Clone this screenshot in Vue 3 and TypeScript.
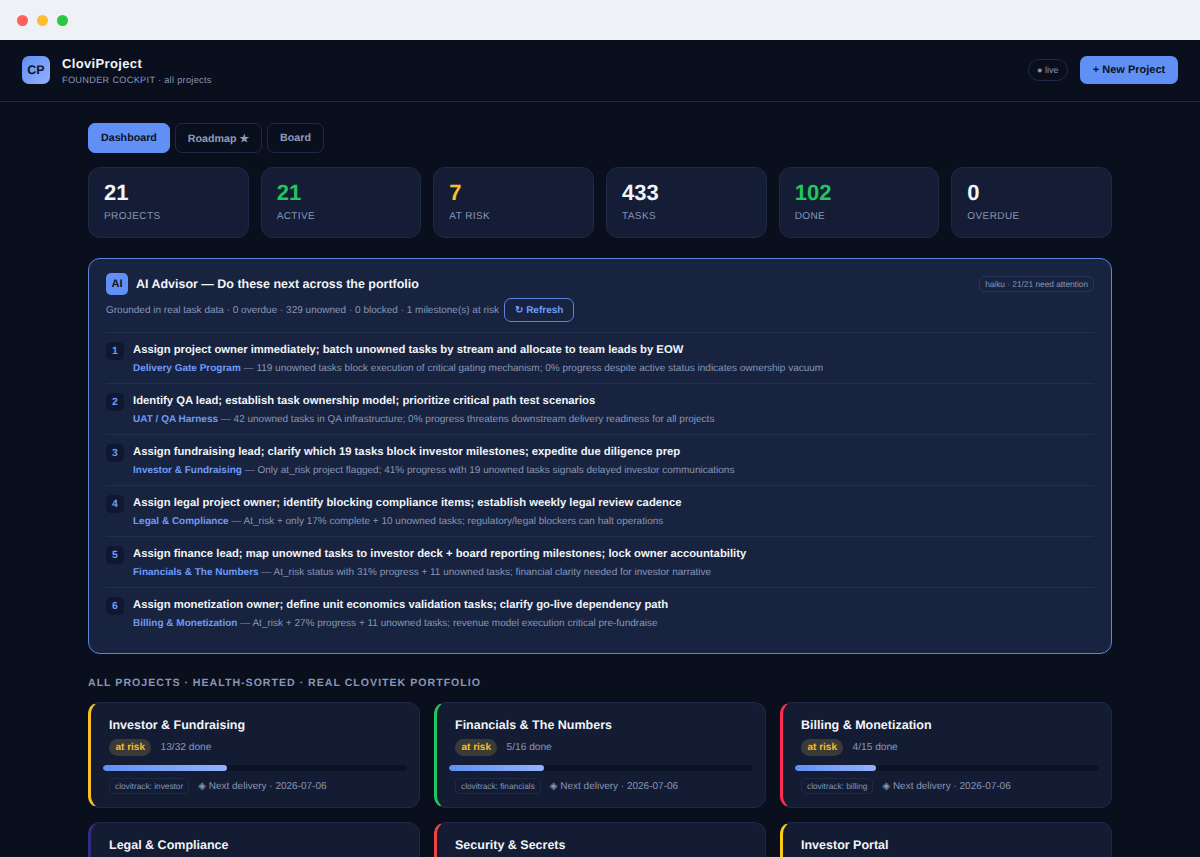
<script setup lang="ts">
interface Stat {
  value: number;
  label: string;
  tone?: string;
}

interface Advice {
  title: string;
  project: string;
  why: string;
}

interface Project {
  name: string;
  done: number;
  total: number;
  track: string;
  accent: string;
}

const stats: Stat[] = [
  { value: 21, label: 'PROJECTS' },
  { value: 21, label: 'ACTIVE', tone: 'green' },
  { value: 7, label: 'AT RISK', tone: 'yellow' },
  { value: 433, label: 'TASKS' },
  { value: 102, label: 'DONE', tone: 'green' },
  { value: 0, label: 'OVERDUE' },
];

const advice: Advice[] = [
  {
    title: 'Assign project owner immediately; batch unowned tasks by stream and allocate to team leads by EOW',
    project: 'Delivery Gate Program',
    why: '119 unowned tasks block execution of critical gating mechanism; 0% progress despite active status indicates ownership vacuum',
  },
  {
    title: 'Identify QA lead; establish task ownership model; prioritize critical path test scenarios',
    project: 'UAT / QA Harness',
    why: '42 unowned tasks in QA infrastructure; 0% progress threatens downstream delivery readiness for all projects',
  },
  {
    title: 'Assign fundraising lead; clarify which 19 tasks block investor milestones; expedite due diligence prep',
    project: 'Investor & Fundraising',
    why: 'Only at_risk project flagged; 41% progress with 19 unowned tasks signals delayed investor communications',
  },
  {
    title: 'Assign legal project owner; identify blocking compliance items; establish weekly legal review cadence',
    project: 'Legal & Compliance',
    why: 'At_risk + only 17% complete + 10 unowned tasks; regulatory/legal blockers can halt operations',
  },
  {
    title: 'Assign finance lead; map unowned tasks to investor deck + board reporting milestones; lock owner accountability',
    project: 'Financials & The Numbers',
    why: 'At_risk status with 31% progress + 11 unowned tasks; financial clarity needed for investor narrative',
  },
  {
    title: 'Assign monetization owner; define unit economics validation tasks; clarify go-live dependency path',
    project: 'Billing & Monetization',
    why: 'At_risk + 27% progress + 11 unowned tasks; revenue model execution critical pre-fundraise',
  },
];

const projects: Project[] = [
  { name: 'Investor & Fundraising', done: 13, total: 32, track: 'investor', accent: '#fbbf24' },
  { name: 'Financials & The Numbers', done: 5, total: 16, track: 'financials', accent: '#22c55e' },
  { name: 'Billing & Monetization', done: 4, total: 15, track: 'billing', accent: '#fb2d55' },
  { name: 'Legal & Compliance', done: 3, total: 18, track: 'legal', accent: '#312e81' },
  { name: 'Security & Secrets', done: 4, total: 14, track: 'security', accent: '#ef4444' },
  { name: 'Investor Portal', done: 5, total: 15, track: 'portal', accent: '#facc15' },
];

const percent = (p: Project): string => `${(p.done / p.total) * 100}%`;
</script>

<template>
  <div class="window">
    <div class="chrome">
      <span class="dot red"></span>
      <span class="dot amber"></span>
      <span class="dot lime"></span>
    </div>

    <header class="topbar">
      <div class="brand">
        <div class="logo">CP</div>
        <div>
          <div class="brand-name">CloviProject</div>
          <div class="brand-sub">FOUNDER COCKPIT · all projects</div>
        </div>
      </div>
      <div class="top-actions">
        <span class="live">● live</span>
        <button class="new-btn">+ New Project</button>
      </div>
    </header>

    <main class="content">
      <nav class="tabs">
        <button class="tab active">Dashboard</button>
        <button class="tab">Roadmap ★</button>
        <button class="tab">Board</button>
      </nav>

      <section class="stats">
        <div v-for="s in stats" :key="s.label" class="stat">
          <div class="stat-value" :class="s.tone">{{ s.value }}</div>
          <div class="stat-label">{{ s.label }}</div>
        </div>
      </section>

      <section class="advisor">
        <div class="advisor-head">
          <div class="advisor-title">
            <span class="ai-badge">AI</span>
            <h2>AI Advisor — Do these next across the portfolio</h2>
          </div>
          <span class="model">haiku · 21/21 need attention</span>
        </div>
        <div class="advisor-sub">
          <span>Grounded in real task data · 0 overdue · 329 unowned · 0 blocked · 1 milestone(s) at risk</span>
          <button class="refresh">↻ Refresh</button>
        </div>
        <ol class="advice-list">
          <li v-for="(a, i) in advice" :key="a.project" class="advice">
            <span class="num">{{ i + 1 }}</span>
            <div>
              <div class="advice-title">{{ a.title }}</div>
              <div class="advice-why"><b>{{ a.project }}</b> — {{ a.why }}</div>
            </div>
          </li>
        </ol>
      </section>

      <h3 class="section-title">ALL PROJECTS · HEALTH-SORTED · REAL CLOVITEK PORTFOLIO</h3>

      <section class="grid">
        <article
          v-for="p in projects"
          :key="p.name"
          class="card"
          :style="{ borderLeftColor: p.accent }"
        >
          <div class="card-name">{{ p.name }}</div>
          <div class="card-meta">
            <span class="risk">at risk</span>
            <span>{{ p.done }}/{{ p.total }} done</span>
          </div>
          <div class="bar"><div class="bar-fill" :style="{ width: percent(p) }"></div></div>
          <div class="card-foot">
            <span class="track">clovitrack: {{ p.track }}</span>
            <span>◈ Next delivery · 2026-07-06</span>
          </div>
        </article>
      </section>
    </main>
  </div>
</template>

<style>
html,
body {
  margin: 0;
  height: 857px;
  overflow: hidden;
  background: #0a0e1c;
}
</style>

<style scoped>
.window {
  height: 857px;
  overflow: hidden;
  font-family: "Liberation Sans", Arial, sans-serif;
  text-rendering: geometricPrecision;
  color: #f1f5f9;
  background: #0a0f1e;
}

.chrome {
  height: 40px;
  background: #eef1f6;
  display: flex;
  align-items: center;
  gap: 9px;
  padding-left: 17px;
}

.dot {
  width: 11px;
  height: 11px;
  border-radius: 50%;
}
.red { background: #ff5f57; }
.amber { background: #febc2e; }
.lime { background: #28c840; }

.topbar {
  height: 60px;
  padding: 0 22px 1px;
  border-bottom: 1px solid #1e2a45;
  display: flex;
  align-items: center;
  justify-content: space-between;
  background: #0a0f1e;
}

.brand {
  display: flex;
  align-items: center;
  gap: 12px;
}

.logo {
  width: 28px;
  height: 28px;
  border-radius: 7px;
  background: linear-gradient(135deg, #5f8df5, #93b1fb);
  color: #0b1224;
  font-weight: 700;
  font-size: 12.5px;
  display: flex;
  align-items: center;
  justify-content: center;
}

.brand-name {
  font-size: 13px;
  font-weight: 700;
  letter-spacing: 0.35px;
  color: #f1f5f9;
}

.brand-sub {
  margin-top: 4px;
  font-size: 9.2px;
  letter-spacing: 0.3px;
  color: #8896b6;
}

.top-actions {
  display: flex;
  align-items: center;
  gap: 12px;
}

.live {
  font-size: 9px;
  color: #8896b6;
  border: 1px solid #1e2a45;
  border-radius: 999px;
  padding: 4px 8.5px;
  line-height: 12px;
}

.new-btn {
  height: 28px;
  width: 98px;
  padding: 0;
  border: none;
  border-radius: 7px;
  background: #6090f5;
  color: #0b1224;
  font: 700 11px "Liberation Sans", Arial, sans-serif;
  text-rendering: geometricPrecision;
}

.content {
  padding: 21px 88px 0;
}

.tabs {
  display: flex;
  gap: 5px;
}

.tab {
  height: 30px;
  padding: 0 12px;
  background: transparent;
  border: 1px solid #1e2a45;
  border-radius: 7px;
  color: #8e9cbb;
  font: 700 10.7px "Liberation Sans", Arial, sans-serif;
  text-rendering: geometricPrecision;
}

.tab.active {
  background: #6090f5;
  border-color: #6090f5;
  color: #0b1224;
}

.stats {
  display: grid;
  grid-template-columns: repeat(6, 1fr);
  gap: 12px;
  margin-top: 14px;
}

.stat {
  height: 71px;
  box-sizing: border-box;
  padding: 12px 15px 0;
  background: #141d35;
  border: 1px solid #1e2a45;
  border-radius: 12px;
}

.stat-value {
  font-size: 22px;
  font-weight: 700;
  line-height: 25px;
  color: #f1f5f9;
}
.stat-value.green { color: #22c55e; }
.stat-value.yellow { color: #fbbf24; }

.stat-label {
  margin-top: 6px;
  font-size: 10px;
  letter-spacing: 0.4px;
  color: #8896b6;
}

.advisor {
  margin-top: 20px;
  box-sizing: border-box;
  height: 396px;
  padding: 14px 17px 0;
  background: #18233f;
  border: 1px solid #5c85e0;
  border-radius: 12px;
}

.advisor-head {
  display: flex;
  align-items: center;
  justify-content: space-between;
}

.advisor-title {
  display: flex;
  align-items: center;
  gap: 8px;
}

.ai-badge {
  width: 22px;
  height: 22px;
  border-radius: 5px;
  background: #6090f5;
  color: #0b1224;
  font-size: 11px;
  font-weight: 700;
  display: flex;
  align-items: center;
  justify-content: center;
}

.advisor-title h2 {
  margin: 0;
  font-size: 12.47px;
  font-weight: 700;
  color: #f1f5f9;
}

.model {
  font-size: 8.3px;
  color: #8896b6;
  border: 1px solid #27345a;
  border-radius: 5px;
  padding: 2px 5px;
}

.advisor-sub {
  display: flex;
  align-items: center;
  gap: 5px;
  margin-top: 3px;
  font-size: 10px;
  color: #8896b6;
}

.refresh {
  height: 24px;
  padding: 0 10px;
  background: transparent;
  border: 1px solid #5c85e0;
  border-radius: 7px;
  color: #6f9bf8;
  font: 700 10px "Liberation Sans", Arial, sans-serif;
  text-rendering: geometricPrecision;
}

.advice-list {
  list-style: none;
  margin: 10px 0 0;
  padding: 0;
}

.advice {
  display: flex;
  gap: 9px;
  height: 51px;
  box-sizing: border-box;
  padding-top: 10px;
  border-top: 1px solid #22304f;
}

.num {
  flex: none;
  width: 18px;
  height: 18px;
  margin-top: -1px;
  border-radius: 5px;
  background: #0f1830;
  color: #6f9bf8;
  font-size: 10.4px;
  font-weight: 700;
  display: flex;
  align-items: center;
  justify-content: center;
}

.advice-title {
  font-size: 11.27px;
  font-weight: 700;
  line-height: 14px;
  color: #f1f5f9;
}

.advice-why {
  margin-top: 4.5px;
  font-size: 10px;
  line-height: 14px;
  color: #8896b6;
}

.advice-why b {
  color: #6f9bf8;
}

.section-title {
  margin: 22px 0 0;
  font-size: 10.6px;
  line-height: 14px;
  font-weight: 700;
  letter-spacing: 1px;
  color: #8896b6;
}

.grid {
  display: grid;
  grid-template-columns: repeat(3, 1fr);
  gap: 14px;
  margin-top: 12px;
}

.card {
  height: 106px;
  box-sizing: border-box;
  padding: 14px 12px 0 12px;
  background: #131c33;
  border: 1px solid #1e2a45;
  border-left: 3px solid transparent;
  border-radius: 12px;
}

.card-name {
  margin-left: 6px;
  font-size: 12.5px;
  font-weight: 700;
  line-height: 16px;
  color: #f1f5f9;
}

.card-meta {
  display: flex;
  align-items: center;
  gap: 9px;
  margin: 6px 0 0 6px;
  font-size: 10.2px;
  color: #8896b6;
}

.risk {
  padding: 2px 6.5px;
  font-size: 10px;
  line-height: 13px;
  border-radius: 999px;
  background: #3a3a38;
  color: #fbbf24;
  font-weight: 700;
}

.bar {
  height: 6px;
  margin-top: 9px;
  border-radius: 3px;
  background: #0c1326;
  overflow: hidden;
}

.bar-fill {
  height: 100%;
  border-radius: 3px;
  background: linear-gradient(90deg, #6090f5, #93b1fb);
}

.card-foot {
  display: flex;
  align-items: center;
  gap: 9px;
  margin: 7px 0 0 6px;
  font-size: 10px;
  color: #8896b6;
}

.track {
  font-size: 8.3px;
  padding: 2px 5px;
  border: 1px solid #1e2a45;
  border-radius: 5px;
}
</style>
